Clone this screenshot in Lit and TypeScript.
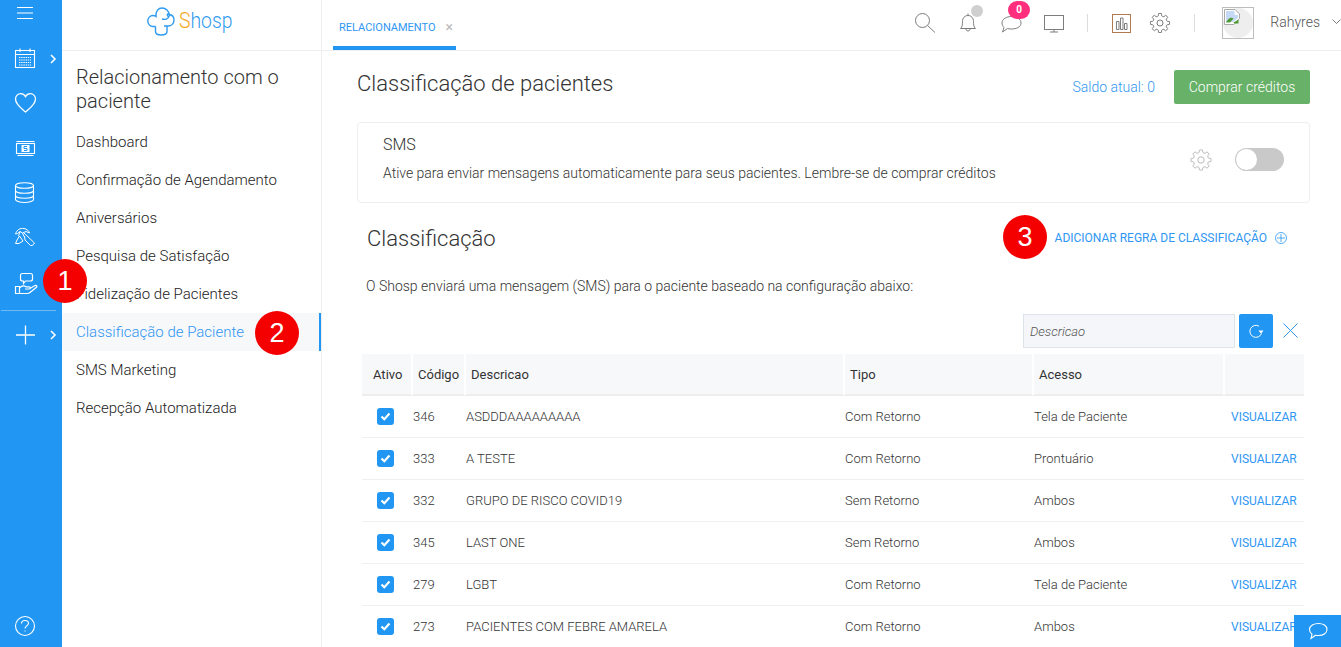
import { LitElement, html, css, svg } from "lit";
import { customElement } from "lit/decorators.js";

function gear(cx: number, cy: number, ro: number, ri: number, teeth = 8) {
  const pts: string[] = [];
  const step = (Math.PI * 2) / teeth;
  for (let i = 0; i < teeth; i++) {
    const a = i * step - Math.PI / 2;
    const p = (r: number, d: number) => `${(cx + r * Math.cos(a + d * step)).toFixed(2)} ${(cy + r * Math.sin(a + d * step)).toFixed(2)}`;
    pts.push(`${i === 0 ? "M" : "L"}${p(ri, -0.5)} L${p(ri + 0.4, -0.3)} L${p(ro, -0.2)} Q${p(ro + 0.5, 0)} ${p(ro, 0.2)} L${p(ri + 0.4, 0.3)}`);
  }
  return pts.join(" ") + " Z";
}

const rows = [
  ["346", "ASDDDAAAAAAAAA", "Com Retorno", "Tela de Paciente"],
  ["333", "A TESTE", "Com Retorno", "Prontuário"],
  ["332", "GRUPO DE RISCO COVID19", "Sem Retorno", "Ambos"],
  ["345", "LAST ONE", "Sem Retorno", "Ambos"],
  ["279", "LGBT", "Com Retorno", "Tela de Paciente"],
  ["273", "PACIENTES COM FEBRE AMARELA", "Com Retorno", "Ambos"],
];

const menu = ["Dashboard", "Confirmação de Agendamento", "Aniversários", "Pesquisa de Satisfação", "Fidelização de Pacientes", "Classificação de Paciente", "SMS Marketing", "Recepção Automatizada"];

const chev = (y: number) => svg`<path d="M51 ${y - 4} L55 ${y} L51 ${y + 4}" stroke-width="1.6"/>`;

const railIcons = [
  svg`<rect x="15.5" y="14.5" width="19" height="17"/><path d="M15.5 18.5H34.5M20 12.5V16M30 12.5V16"/><path d="M19 21.5H31M19 24H31M19 26.5H31M19 29H31" stroke-dasharray="1.4 .8"/>${chev(23)}`,
  svg`<path d="M25.5 31 C21 27 15.5 23.5 15.5 18 C15.5 14.8 18 12.7 20.6 12.7 C22.6 12.7 24.5 13.8 25.5 15.6 C26.5 13.8 28.4 12.7 30.4 12.7 C33 12.7 35.5 14.8 35.5 18 C35.5 23.5 30 27 25.5 31 Z" stroke-width="1.3"/>`,
  svg`<path d="M16.500 15.500H34.500M17.500 29.500H33.500"/><rect x="16.500" y="17.500" width="18" height="10"/><rect x="21.500" y="19" width="8" height="7" fill="#fff" stroke="none"/><path d="M27 20.500H24V22.500H27V24.500H24" stroke="#2196f3" stroke-width="1"/>`,
  svg`<ellipse cx="24.500" cy="14.500" rx="9" ry="2.800"/><path d="M15.500 14.500V28.500C15.500 30 19.500 31.500 24.500 31.500C29.500 31.500 33.500 30 33.500 28.500V14.500"/><path d="M15.500 19.500C15.500 21 19.500 22.300 24.500 22.300C29.500 22.300 33.500 21 33.500 19.500M15.500 24.500C15.500 26 19.500 27.200 24.500 27.200C29.500 27.200 33.500 26 33.500 24.500"/>`,
  svg`<path d="M15.500 18 C17 13.500 20 12 24 12.500 C27 13 29 15 29.500 17 L26 15.500 L22.500 17 L20 15.500 L17.500 17.500 Z" stroke-width="1"/><path d="M20 15.500 L18.500 20 M22.500 17 L24 20.500 M19.500 20 L23 25 L19 27.500 L15.500 27.500 L17 24 Z M24 17 L34.500 27 L32.500 29.500 L30.500 29.500 L25 24 L24.500 20" stroke-width="1"/>`,
  svg`<path d="M22.500 12.500H30.500Q32.500 12.500 32.500 14.500V18Q32.500 20 30.500 20H25.500L23.500 22.500V20H22.500Q20.500 20 20.500 18V14.500Q20.500 12.500 22.500 12.500Z" stroke-width="1.200"/><path d="M15.500 25.500H19.500V32.500H15.500Z M19.500 27 C22 24.500 24 24.500 26 25.800 H29.200 C30.500 25.800 30.500 28 29 28 H25 M29.500 27.700 L35 24.500 C36.500 24 37.500 25.300 36.500 26.300 L30 31.500 C29 32.300 28 32.500 27 32.500 H19.500" stroke-width="1.200"/>`,
];

@customElement("app-root")
export class AppRoot extends LitElement {
  static styles = css`
    :host { display: flex; width: 1341px; height: 647px; overflow: hidden; position: relative; background: #fff; font-family: Roboto, "Liberation Sans", sans-serif; color: #3c4043; }
    * { box-sizing: border-box; }
    svg { display: block; flex: none; }
    .rail { width: 62px; flex: none; background: #2196f3; display: flex; flex-direction: column; }
    .rail svg { fill: none; stroke: #fff; stroke-width: 1.1; }
    .burger { height: 36px; }
    .rail-sep { height: 1px; background: rgba(255,255,255,.35); margin: 4px 6px 0 1px; }
    .rail-spacer { flex: 1; }
    .side { width: 260px; flex: none; border-right: 1px solid #eeeeee; display: flex; flex-direction: column; }
    .logo { height: 51px; border-bottom: 1px solid #eeeeee; display: flex; align-items: center; padding: 0 0 8px 85px; gap: 4px; }
    .logo svg { fill: none; stroke: #2f9bf0; stroke-width: 1.4; }
    .logo-text { font-family: Roboto, sans-serif; font-size: 22px; font-weight: 300; line-height: 1; color: #2f9bf0; transform: scaleX(.88); transform-origin: left center; }
    .logo-text b { font-weight: 300; color: #f5a623; }
    .side h2 { margin: 14px 0 0; padding: 0 14px; font-size: 20px; line-height: 24px; font-weight: 300; color: #333; height: 58px; }
    .item { height: 38px; line-height: 38px; padding-left: 14px; font-size: 15px; font-weight: 300; color: #222; white-space: nowrap; }
    .item.on { color: #2f96f3; background: #f7f8fa; border-right: 2px solid #2196f3; }
    .main { flex: 1; min-width: 0; display: flex; flex-direction: column; }
    .top { height: 51px; flex: none; border-bottom: 1px solid #eeeeee; display: flex; align-items: flex-start; padding-left: 11px; }
    .tab { width: 123px; height: 50px; border-bottom: 4px solid #2196f3; padding: 21px 0 0 6px; font-size: 11px; line-height: 13px; color: #2f96f3; display: flex; gap: 10px; }
    .tab span { color: #bbb; font-size: 14px; line-height: 13px; }
    .tools { margin-left: auto; display: flex; align-items: flex-start; height: 50px; position: relative; width: 426px; }
    .tools svg { fill: none; stroke: #7d7d7d; stroke-width: 1; }
    .t { margin-top: 12px; }
    .vsep { width: 1px; height: 18px; background: #ddd; margin-top: 14px; }
    .m23 { margin-left: 23px; } .m22 { margin-left: 22px; } .m25 { margin-left: 25px; } .m18 { margin-left: 18px; } .m24 { margin-left: 24px; } .m28 { margin-left: 28px; }
    .dot { position: absolute; left: 56px; top: 5px; width: 12px; height: 12px; border-radius: 50%; background: #cfcfcf; }
    .badge { position: absolute; left: 93px; top: 1px; width: 22px; height: 18px; border-radius: 9px; background: #ff2f7e; color: #fff; font-size: 10px; font-weight: 700; line-height: 18px; text-align: center; }
    .avatar { width: 32px; height: 32px; margin-top: 7px; border: 1px solid #bdbdbd; position: relative; overflow: hidden; flex: none; }
    .avatar i { position: absolute; inset: 0; border-radius: 50%; background: #eee; }
    .avatar svg { position: absolute; left: 1px; top: 1px; stroke: none; }
    .broken-page { fill: #fff; stroke: #a8a8a8; }
    .broken-sky { fill: #c5d8f5; stroke: none; }
    .broken-hill { fill: #4f9a34; stroke: none; }
    .name { font-size: 14px; font-weight: 300; line-height: 44px; color: #555; margin-left: 16px; white-space: nowrap; }
    .caret { margin: 19px 0 0 12px; }
    .content { padding: 19px 31px 0 35px; flex: 1; }
    .title-row { display: flex; align-items: center; height: 34px; }
    .title-row h1 { margin: -8px auto 0 0; font-size: 22px; font-weight: 300; color: #333; }
    .saldo { color: #2f96f3; font-size: 14px; font-weight: 300; margin-right: 19px; }
    .buy { width: 136px; height: 34px; background: #67b168; color: #fff; border-radius: 2px; font-size: 14px; font-weight: 300; text-align: center; line-height: 34px; }
    .card { margin-top: 18px; height: 81px; border: 1px solid #eeeeee; border-radius: 4px; display: flex; align-items: center; padding: 0 25px; }
    .card-text { flex: 1; margin-top: -7px; }
    .card-title { font-size: 16px; font-weight: 300; line-height: 20px; color: #333; margin-bottom: 8px; }
    .card-desc { font-size: 14px; font-weight: 300; line-height: 20px; color: #333; }
    .card svg { fill: none; stroke: #bbb; stroke-width: 1; margin-right: 23px; margin-top: -6px; }
    .toggle { width: 49px; height: 23px; border-radius: 12px; background: #c9c9c9; margin-top: -6px; padding: 1px; }
    .toggle i { display: block; width: 21px; height: 21px; border-radius: 50%; background: #fff; }
    .head2 { display: flex; align-items: center; height: 44px; margin-top: 12px; padding: 2px 23px 0 10px; }
    .head2 h3 { margin: 0 auto 0 0; font-size: 22px; font-weight: 300; color: #333; }
    .add { color: #2f96f3; font-size: 12px; white-space: nowrap; }
    .head2 svg { fill: none; stroke: #2f96f3; stroke-width: .8; margin-left: 8px; }
    .para { margin: 18px 0 0 9px; font-size: 14px; font-weight: 300; line-height: 18px; color: #333; }
    .filter { display: flex; justify-content: flex-end; align-items: center; margin-top: 19px; padding-right: 12px; }
    .filter input { width: 212px; height: 34px; background: #f4f6f9; border: 1px solid #dde3ea; padding: 0 6px; font: italic 300 13px Roboto, sans-serif; outline: none; }
    .filter input::placeholder { color: #555; opacity: 1; }
    .go { width: 34px; height: 34px; background: #2196f3; border-radius: 2px; margin-left: 4px; display: flex; align-items: center; justify-content: center; }
    .go svg { fill: none; stroke: #fff; stroke-width: 1; }
    .x { margin-left: 10px; fill: none; stroke: #2f96f3; stroke-width: 1; margin-top: -2px; }
    .table { margin: 6px 0 0 5px; width: 942px; }
    .tr { display: grid; grid-template-columns: 51px 53px 379px 189px 191px 79px; height: 42px; border-bottom: 1px solid #f0f0f0; align-items: center; font-size: 13px; font-weight: 300; color: #333; white-space: nowrap; }
    .th { background: #f7f8fa; border-bottom: 2px solid #eeeeee; font-weight: 400; align-items: stretch; color: #333; }
    .th div { border-right: 2px solid #fff; padding-left: 5px; line-height: 41px; }
    .th div:first-child { padding-left: 11px; }
    .th div:last-child { border-right: 0; }
    .check { width: 17px; height: 17px; margin-left: 15px; background: #2196f3; border-radius: 3px; display: flex; align-items: center; justify-content: center; }
    .check svg { fill: none; stroke: #fff; stroke-width: 2.2; }
    .view { color: #2f96f3; padding-left: 6px; font-size: 12px; font-weight: 400; }
    .marker { position: absolute; width: 44px; height: 44px; border-radius: 50%; background: #f40000; color: #fff; font-family: "Liberation Sans", Arial, sans-serif; font-size: 27px; line-height: 44px; text-align: center; }
    .m1 { left: 43px; top: 259px; } .m2 { left: 255px; top: 311px; } .m3 { left: 1003px; top: 215px; }
    .chat { position: absolute; left: 1294px; top: 615px; width: 47px; height: 32px; background: #2196f3; display: flex; align-items: center; justify-content: center; }
    .chat svg { fill: none; stroke: #fff; stroke-width: 1.1; }
  `;

  render() {
    return html`
      <nav class="rail">
        <div class="burger"><svg width="62" height="36" viewBox="0 0 62 36"><path d="M17 7.500H33M17 13H33M17 18.500H33"/></svg></div>
        ${railIcons.map((i) => html`<svg width="62" height="45" viewBox="0 0 62 45">${i}</svg>`)}
        <div class="rail-sep"></div>
        <svg width="62" height="45" viewBox="0 0 62 45"><path d="M16 24H35M25.500 14.500V33.500" stroke-width="1.300"/>${chev(24)}</svg>
        <div class="rail-spacer"></div>
        <svg width="62" height="37" viewBox="0 0 62 37"><circle cx="25" cy="16" r="9.500"/><path d="M21.500 13.500C21.500 11.500 23 10.500 25 10.500C27 10.500 28.500 11.700 28.500 13.300C28.500 15.800 25 16 25 18.500"/><path d="M25 20.500V21.500"/></svg>
      </nav>

      <aside class="side">
        <div class="logo">
          <svg width="28" height="30" viewBox="0 0 28 30"><path d="M8.500 20.500H6C3 20.500 .8 18 .8 15C.8 12 3 9.500 6 9.500C7 9.500 8 9.800 9 10.500C8.500 5 11.500 2 15 2C19 2 22 5 22 8.500C25 8.800 27 11 27 14C27 17.500 24.500 20 21 20H17"/><path d="M8.500 20.500V25.500C8.500 27.500 10.500 29 14 29C17.500 29 20 27.500 20 25.500V20"/><path d="M15 13C18 14 21 13 22 10.500"/><circle cx="21.500" cy="9" r="1.200"/></svg>
          <span class="logo-text"><b>S</b>hosp</span>
        </div>
        <h2>Relacionamento com o paciente</h2>
        ${menu.map((m, i) => html`<div class="item ${i === 5 ? "on" : ""}">${m}</div>`)}
      </aside>

      <section class="main">
        <header class="top">
          <div class="tab">RELACIONAMENTO <span>×</span></div>
          <div class="tools">
            <svg class="t" width="20" height="21" viewBox="0 0 20 21"><circle cx="7.500" cy="8.500" r="7"/><path d="M12.500 13.500L20 20.500"/></svg>
            <svg class="t m23" width="20" height="21" viewBox="0 0 20 21"><path d="M2.500 16.500C4.500 15 4.500 12 4.500 9.500C4.500 6 6.800 3.500 10 3.500C13.200 3.500 15.500 6 15.500 9.500C15.500 12 15.500 15 17.500 16.500Z"/><path d="M10 1.500V3.500M8 17C8 19.700 12 19.700 12 17"/></svg>
            <svg class="t m23" width="21" height="21" viewBox="0 0 21 21"><path d="M10.500 4.500C15.500 4.500 20 7 20 11C20 15 15.500 17 10.500 17C9 17 7.500 16.800 6.500 16.500L1.500 20L3 15.500C1.800 14.200 1 12.800 1 11C1 7 5.500 4.500 10.500 4.500Z"/></svg>
            <svg class="t m22" width="20" height="21" viewBox="0 0 20 21"><rect x=".5" y="3.500" width="19" height="14"/><path d="M10 17.500V20M6 20H14"/></svg>
            <div class="vsep m23"></div>
            <svg class="t m25" width="20" height="21" viewBox="0 0 20 21"><rect x=".5" y="2.500" width="18" height="18" stroke="#b07a4e"/><path d="M4.500 9.500H7V17.500H4.500ZM8.500 6H11V17.500H8.500ZM12.500 11.500H15V17.500H12.500Z"/></svg>
            <svg class="t m18" width="20" height="21" viewBox="0 0 20 21"><path d="${gear(10, 11, 9.5, 7)}"/><circle cx="10" cy="11" r="3"/></svg>
            <div class="vsep m24"></div>
            <div class="avatar m28"><i></i>
              <svg width="16" height="16" viewBox="0 0 16 16"><path class="broken-page" d="M.5.500H11L15.500 5V9.500L10 15.500H.5Z"/><path class="broken-sky" d="M2 2H10.500V6H14V9L9 13 H2Z"/><path class="broken-hill" d="M2 13.500C4 9.500 7 7.500 9.500 9.500L6 13.500Z M9.500 13.500L14.500 10.500V14.500H10Z"/></svg>
            </div>
            <span class="name">Rahyres</span>
            <svg class="caret" width="9" height="6" viewBox="0 0 9 6"><path d="M.5.500L4.500 4.500L8.500.500"/></svg>
            <span class="dot"></span><span class="badge">0</span>
          </div>
        </header>

        <div class="content">
          <div class="title-row">
            <h1>Classificação de pacientes</h1>
            <span class="saldo">Saldo atual: 0</span>
            <div class="buy">Comprar créditos</div>
          </div>
          <div class="card">
            <div class="card-text">
              <div class="card-title">SMS</div>
              <div class="card-desc">Ative para enviar mensagens automaticamente para seus pacientes. Lembre-se de comprar créditos</div>
            </div>
            <svg width="22" height="22" viewBox="0 0 22 22"><path d="${gear(11, 11, 10, 7.5)}"/><circle cx="11" cy="11" r="3.200"/></svg>
            <div class="toggle"><i></i></div>
          </div>
          <div class="head2">
            <h3>Classificação</h3>
            <span class="add">ADICIONAR REGRA DE CLASSIFICAÇÃO</span>
            <svg width="12" height="12" viewBox="0 0 12 12"><circle cx="6" cy="6" r="5.500"/><path d="M6 2V10M2 6H10"/></svg>
          </div>
          <p class="para">O Shosp enviará uma mensagem (SMS) para o paciente baseado na configuração abaixo:</p>
          <div class="filter">
            <input placeholder="Descricao" />
            <div class="go"><svg width="16" height="16" viewBox="0 0 16 16"><path d="M13.500 10.500A6 6 0 1 1 11 3.200"/><path d="M10.500 7.500H15.500L13 10.800Z" fill="#fff" stroke="none"/></svg></div>
            <svg class="x" width="15" height="15" viewBox="0 0 15 15"><path d="M.5.500L14.500 14.500M14.500.500L.5 14.500"/></svg>
          </div>
          <div class="table">
            <div class="tr th"><div>Ativo</div><div>Código</div><div>Descricao</div><div>Tipo</div><div>Acesso</div><div></div></div>
            ${rows.map((r) => html`<div class="tr">
              <div><div class="check"><svg width="11" height="9" viewBox="0 0 11 9"><path d="M1.500 4.500L4.300 7.200L9.500 1.500"/></svg></div></div>
              <div>${r[0]}</div><div>${r[1]}</div><div>${r[2]}</div><div>${r[3]}</div><div class="view">VISUALIZAR</div>
            </div>`)}
          </div>
        </div>
      </section>

      <div class="marker m1">1</div>
      <div class="marker m2">2</div>
      <div class="marker m3">3</div>
      <div class="chat"><svg width="20" height="18" viewBox="0 0 20 18"><path d="M10.500 1.500C15 1.500 19 3.700 19 7.500C19 11.300 15 13.500 10.500 13.500C9.500 13.500 8.500 13.400 7.500 13.200L3 16.500L4 12.300C2.300 11 1.500 9.400 1.500 7.500C1.500 3.700 6 1.500 10.500 1.500Z"/></svg></div>
    `;
  }
}
